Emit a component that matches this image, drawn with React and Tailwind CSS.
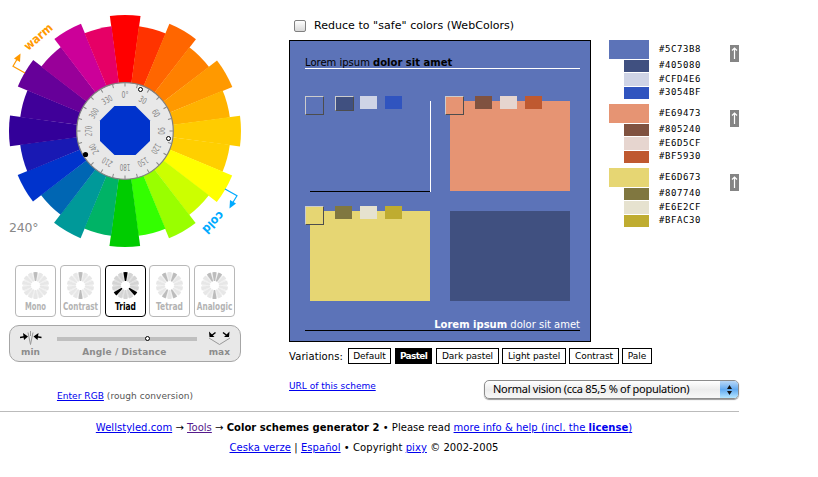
import React from "react";

const WHEEL = [
  "#FF0000", "#FF3300", "#FF6600", "#FF8000", "#FF9900", "#FFB200",
  "#FFCC00", "#FFCF00", "#FFFF00", "#CCFF00", "#99FF00", "#33FF00",
  "#00CC00", "#00B366", "#009999", "#0066B3", "#0033CC", "#1919B3",
  "#330099", "#400099", "#660099", "#990099", "#CC0099", "#E60066",
];

function polar(cx, cy, r, deg) {
  const a = (deg * Math.PI) / 180;
  return [cx + r * Math.sin(a), cy - r * Math.cos(a)];
}

function wedge(cx, cy, r0, r1, from, to) {
  const [a, b] = polar(cx, cy, r0, from);
  const [c, d] = polar(cx, cy, r1, from);
  const [e, f] = polar(cx, cy, r1, to);
  const [g, h] = polar(cx, cy, r0, to);
  return `M${a} ${b}L${c} ${d}A${r1} ${r1} 0 0 1 ${e} ${f}L${g} ${h}Z`;
}

function ColorWheel() {
  const cx = 125;
  const cy = 131;
  return (
    <svg width="250" height="255" viewBox="0 0 250 255" className="block font-['DejaVu_Sans',sans-serif]">
      {WHEEL.map((c, i) => (
        <path key={i} fill={c} d={wedge(cx, cy, 40, i % 2 ? 105.7 : 116, i * 15 - 7.5, i * 15 + 7.7)} />
      ))}
      <circle cx={cx} cy={cy} r="48.3" fill="#e8e8e8" stroke="#808080" strokeWidth="1.2" />
      {WHEEL.map((_, i) => (
        <g key={i} transform={`rotate(${i * 15} ${cx} ${cy})`}>
          <path d="M125 83v3.5" stroke="#888" strokeWidth="1" />
          {i % 2 === 0 && (
            <text x="125" y="98.300" textAnchor="middle" fontSize="8.800" fill="#858585" className="font-['DejaVu_Sans_Condensed','DejaVu_Sans',sans-serif]" textLength={i === 0 ? 7 : i * 15 < 100 ? 7.5 : 10.5} lengthAdjust="spacingAndGlyphs">
              {i === 0 ? "0°" : i * 15}
            </text>
          )}
        </g>
      ))}
      <path d="M114.5 106H135.5L150 120.5V141L135.5 155H114.5L100 141V120.5Z" fill="#0033CC" />
      <circle cx="140.5" cy="89.5" r="2" fill="#fff" stroke="#000" />
      <circle cx="168.5" cy="138.5" r="2" fill="#fff" stroke="#000" />
      <circle cx="85.5" cy="154.5" r="2.6" fill="#000" />
      <g fill="none" stroke="#ff9900" strokeWidth="1.2">
        <path d="M25 73L13 66.3L17.5 58.5" />
      </g>
      <path d="M20.5 53.5L20 62L14 58.5Z" fill="#ff9900" />
      <g fill="none" stroke="#00aaff" strokeWidth="1.2">
        <path d="M225 189L237 195.8L232.5 203" />
      </g>
      <path d="M229.5 208.5L230 200L236 203.5Z" fill="#00aaff" />
      <text transform="translate(28.3 51) rotate(-41)" fontSize="12" fontWeight="bold" fill="#ff9900" textLength="33.5" lengthAdjust="spacingAndGlyphs">warm</text>
      <text transform="translate(219.3 210.5) rotate(134)" fontSize="12" fontWeight="bold" fill="#00aaff" textLength="25.500" lengthAdjust="spacingAndGlyphs">cold</text>
      <text x="9" y="232" fontSize="12.500" fill="#888" textLength="29.5">240°</text>
    </svg>
  );
}

const MODES = [
  { name: "Mono", on: [0], len: 21 },
  { name: "Contrast", on: [0, 7], len: 35 },
  { name: "Triad", on: [0, 5, 9], len: 21, active: true },
  { name: "Tetrad", on: [1, 6, 8, 13], len: 27 },
  { name: "Analogic", on: [13, 0, 1, 7], len: 35.5 },
];

const SPOKE = 360 / 14;

function ModeButton({ mode }) {
  return (
    <button
      className={
        mode.active
          ? "h-[52px] w-[41px] rounded-[4px] border border-black text-black"
          : "h-[52px] w-[41px] rounded-[4px] border border-[#b8b8b8] text-[#b3b3b3]"
      }
    >
      <svg width="39" height="50" viewBox="0 0 39 50" className="block overflow-visible">
        {Array.from({ length: 14 }, (_, i) => (
          <path key={i} d={wedge(19.5, 19.5, 5, 12.5, i * SPOKE + 8, i * SPOKE + 18)} fill={mode.active ? "#e2e2e2" : "#f1f1f1"} />
        ))}
        {Array.from({ length: 14 }, (_, i) => (
          <path
            key={i}
            d={wedge(19.5, 19.5, 4.5, 13.5, i * SPOKE - 9, i * SPOKE + 9)}
            fill={mode.on.includes(i) ? (mode.active ? "#000" : "#bcbcbc") : mode.active ? "#d4d4d4" : "#e7e7e7"}
          />
        ))}
        <text x="19.5" y="44" textAnchor="middle" fontSize="10" fontWeight="bold" fill="currentColor" textLength={mode.len} lengthAdjust="spacingAndGlyphs" className="font-['DejaVu_Sans_Condensed','DejaVu_Sans',sans-serif]">
          {mode.name}
        </text>
      </svg>
    </button>
  );
}

function DistanceSlider() {
  return (
    <div className="mt-[8px] ml-[9px] h-[37px] w-[232px] rounded-[10px] border border-[#a6a6a6] bg-[#e8e8e8] px-[10px] pt-[5px] text-[9px] font-bold text-[#8c8c8c]">
      <div className="flex items-center">
        <svg width="22" height="15" viewBox="0 0 22 15" className="shrink-0">
          <path d="M8 1.5L10.5 13.5L13 1.5M10.5 0V5" fill="none" stroke="#999" />
          <g stroke="#000" strokeWidth="1.3" fill="none">
            <path d="M0 6.5L6 5.5M15.5 5.5L21.5 6.5" />
          </g>
          <path d="M3 2L8 5.5L4 9Z M18.5 2L13.5 5.5L17.5 9Z" />
        </svg>
        <div className="ml-[15px] flex h-[4px] w-[140px] shrink-0 items-center bg-[#bfbfbf] pl-[88px]">
          <span className="size-[5px] rounded-full border border-black bg-white" />
        </div>
        <svg width="24" height="15" viewBox="0 0 24 15" className="ml-[10px] shrink-0">
          <path d="M2 7L12.5 13.5L23 7" fill="none" stroke="#999" />
          <path d="M8.5 1.5L4 5M16 1.5L20.5 5" stroke="#000" strokeWidth="1.5" />
          <path d="M2 0.5L2.5 6L7.5 6Z M22.5 0.5L22 6L17 6Z" />
        </svg>
      </div>
      <div className="flex items-center justify-between pl-px leading-[13px]">
        <span>min</span>
        <span className="tracking-[0.1px]">Angle / Distance</span>
        <span>max</span>
      </div>
    </div>
  );
}

const SCHEME = [
  ["#5C73B8", "#405080", "#CFD4E6", "#3054BF"],
  ["#E69473", "#805240", "#E6D5CF", "#BF5930"],
  ["#E6D673", "#807740", "#E6E2CF", "#BFAC30"],
];

function Swatches({ colors, framed }) {
  return (
    <div className="absolute -top-[5px] -left-[5px] flex">
      <span className="size-[19px] border border-t-[#cccccc] border-r-[#4d4d4d] border-b-[#4d4d4d] border-l-[#cccccc]" style={{ background: colors[0] }} />
      <span
        className={
          framed
            ? "ml-[11px] h-[15px] w-[19px] border border-t-[#cccccc] border-r-[#4d4d4d] border-b-[#4d4d4d] border-l-[#cccccc]"
            : "mr-[2px] ml-[11px] h-[13px] w-[17px]"
        }
        style={{ background: colors[1] }}
      />
      <span className="ml-[6px] h-[13px] w-[17px]" style={{ background: colors[2] }} />
      <span className="ml-[8px] h-[13px] w-[17px]" style={{ background: colors[3] }} />
    </div>
  );
}

function Preview() {
  return (
    <div className="h-[302px] w-[302px] border border-black bg-[#5C73B8] px-[15px] text-[10px]">
      <div className="h-[28px] w-[275px] border-b border-white pt-[14px] leading-[15px] text-black">
        Lorem ipsum <b>dolor sit amet</b>
      </div>
      <div className="mt-[32px] ml-[5px] grid grid-cols-[120px_120px] gap-5">
        <div className="relative -mr-px -mb-px h-[91px] border-r border-white">
          <div className="h-[91px] border-b border-black" />
          <Swatches colors={SCHEME[0]} framed />
        </div>
        <div className="relative h-[90px] bg-[#E69473]"><Swatches colors={SCHEME[1]} /></div>
        <div className="relative h-[90px] bg-[#E6D673]"><Swatches colors={SCHEME[2]} /></div>
        <div className="h-[90px] bg-[#405080]" />
      </div>
      <div className="mt-[16px] h-[14px] w-[275px] border-b border-black text-right leading-[15px] text-white">
        <b>Lorem ipsum</b> dolor sit amet
      </div>
    </div>
  );
}

function Palette() {
  return (
    <div className="mt-[40px] ml-[18px] w-[130px]">
      {SCHEME.map((group, g) => (
        <div key={g} className="mb-[5px] flex h-[59px]">
          <div className="flex w-[40px] flex-col items-end gap-px">
            <span className="h-[19px] w-[40px]" style={{ background: group[0] }} />
            <span className="h-[12px] w-[25px]" style={{ background: group[1] }} />
            <span className="h-[13px] w-[25px]" style={{ background: group[2] }} />
            <span className="h-[12px] w-[25px]" style={{ background: group[3] }} />
          </div>
          <div className="ml-[10px] flex w-[71px] flex-col font-['DejaVu_Sans_Mono',monospace] text-[9px] tracking-[0.58px] text-black">
            <span className="h-[18px] leading-[18px]">{group[0]}</span>
            <span className="h-[14px] leading-[14px]">{group[1]}</span>
            <span className="h-[13px] leading-[14px]">{group[2]}</span>
            <span className="h-[13px] leading-[14px]">{group[3]}</span>
          </div>
          <svg width="9" height="17" viewBox="0 0 9 17" className={g === 0 ? "mt-[5px]" : "mt-[6px]"}>
            <path d="M0 0H9V17H0Z" fill="#858585" />
            <path d="M4.5 14V3M2 5.5L4.5 3L7 5.5" fill="none" stroke="#fff" strokeWidth="1.2" />
          </svg>
        </div>
      ))}
    </div>
  );
}

const VARIATIONS = [
  ["Default", "w-[43px] mr-[4px]"],
  ["Pastel", "w-[37px] mr-[4px]"],
  ["Dark pastel", "w-[63px] mr-[3px]"],
  ["Light pastel", "w-[64px] mr-[3px]"],
  ["Contrast", "w-[50px] mr-[3px]"],
  ["Pale", "w-[30px]"],
];

function Variations() {
  return (
    <div className="mt-[6px] flex h-[16px] items-center text-[10px] text-black">
      <span className="w-[59px] tracking-[0.1px]">Variations:</span>
      <div className="flex">
        {VARIATIONS.map(([label, w]) => (
          <button
            key={label}
            className={`${w} h-[16px] border border-black text-center text-[9px] leading-[15px] whitespace-nowrap ${label === "Pastel" ? "bg-black font-bold tracking-[-0.7px] text-white" : "bg-white tracking-[-0.05px]"}`}
          >
            {label}
          </button>
        ))}
      </div>
    </div>
  );
}

function VisionSelect() {
  return (
    <div className="flex h-[19px] w-[255px] items-stretch overflow-hidden rounded-[5px] border border-[#8c8c8c] bg-linear-to-b from-white via-[#ececec] to-[#f8f8f8] shadow-[0_1px_1px_#999]">
      <span className="flex-1 pl-[8px] font-['Noto_Sans',sans-serif] text-[11px] leading-[16px] tracking-[-0.27px] whitespace-nowrap text-black">Normal vision (cca 85,5 % of population)</span>
      <span className="flex w-[18px] items-center justify-center bg-linear-to-b from-[#b9d8f7] via-[#62aaf0] to-[#b5e6ff]">
        <svg width="5" height="10" viewBox="0 0 5 10"><path d="M2.5 0L5 4H0ZM2.5 10L0 6H5Z" fill="#111" /></svg>
      </span>
    </div>
  );
}

const LINK = "text-[#0000ee] underline";

export default function App() {
  return (
    <div className="h-[477px] w-[818px] overflow-hidden bg-white font-['DejaVu_Sans',sans-serif]">
      <div className="flex h-[411px]">
        <div className="w-[250px]">
          <ColorWheel />
          <div className="mt-[10px] ml-[15px] flex w-[220px] justify-between">
            {MODES.map((m) => <ModeButton key={m.name} mode={m} />)}
          </div>
          <DistanceSlider />
          <p className="mt-[27px] text-center text-[9px] leading-[14px] tracking-[0.06px] text-[#555]">
            <a className={LINK}>Enter RGB</a> (rough conversion)
          </p>
        </div>
        <div className="ml-[39px]">
          <div className="flex">
            <div className="w-[302px]">
              <label className="flex h-[40px] items-center pt-[11px] pl-[5px] text-[11px] text-black">
                <span className="mr-[8px] size-[12px] rounded-[2px] border border-[#808080] bg-linear-to-b from-white to-[#d8d8d8]" />
                <span className="mt-px whitespace-nowrap tracking-[0.04px]">Reduce to "safe" colors (WebColors)</span>
              </label>
              <Preview />
            </div>
            <Palette />
          </div>
          <Variations />
          <div className="mt-[16px] flex w-[450px] items-start justify-between">
            <a className={`${LINK} text-[9px] leading-[12px]`}>URL of this scheme</a>
            <VisionSelect />
          </div>
        </div>
      </div>
      <footer className="w-[739px] border-t border-[#bbb] pt-[6px] pr-[11px] text-center text-[10px] leading-[20px] text-black">
        <p className="tracking-[0.035px]">
          <a className={LINK}>Wellstyled.com</a> → <a className="text-[#551a8b] underline">Tools</a> → <b>Color schemes generator 2</b> • Please read <a className={LINK}>more info &amp; help (incl. the <b>license</b>)</a>
        </p>
        <p className="tracking-[0.06px]">
          <a className={LINK}>Ceska verze</a> | <a className={LINK}>Español</a> • Copyright <a className={LINK}>pixy</a> © 2002-2005
        </p>
      </footer>
    </div>
  );
}
